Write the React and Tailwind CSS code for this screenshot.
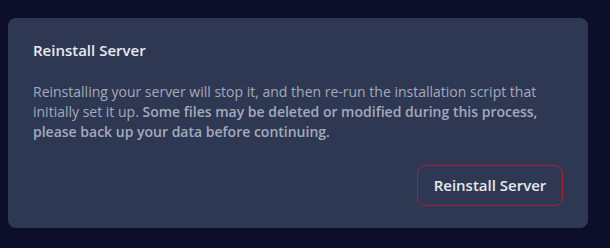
import React from 'react';

const ReinstallCard = () => {
  return (
    <div className="rounded-lg bg-[#2e3853] px-[25px] pt-5 pb-[22px]">
      <h3 className="text-[15px] leading-6 font-semibold text-[#e8eaef]">Reinstall Server</h3>
      <p className="mt-5 text-[14px] leading-5 text-[#a4aabb]">
        Reinstalling your server will stop it, and then re-run the installation script that initially set it up.{' '}
        <span className="font-semibold">
          Some files may be deleted or modified during this process, please back up your data before continuing.
        </span>
      </p>
      <div className="mt-[23px] flex justify-end">
        <button
          type="button"
          className="h-[41px] w-[146px] rounded-lg border border-[#a1232b] text-[15px] font-semibold text-[#e6e8ee]"
        >
          Reinstall Server
        </button>
      </div>
    </div>
  );
};

export default function App() {
  return (
    <div className="min-h-screen w-full bg-[#0d0f2a] pt-[18px] pl-2 pr-[22px] font-['Open_Sans',sans-serif]">
      <ReinstallCard />
    </div>
  );
}
